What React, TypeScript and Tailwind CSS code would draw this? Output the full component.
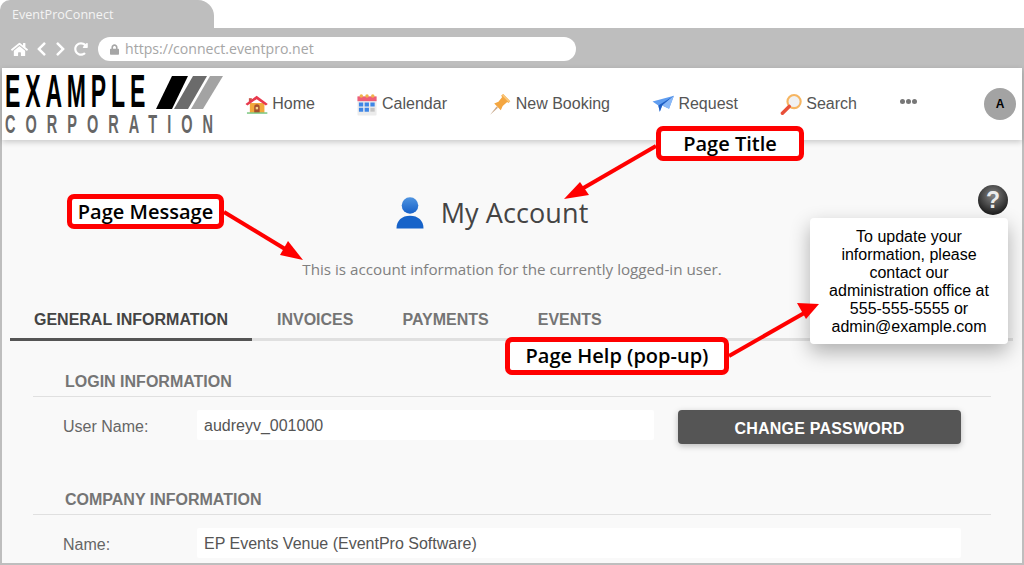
import { FaHome, FaChevronLeft, FaChevronRight, FaRedoAlt, FaLock } from "react-icons/fa"

const HomeIcon = () => (
  <svg width="24" height="20" viewBox="0 0 24 20">
    <path d="M5 9h15v10H5z" fill="#f2a93b" />
    <path d="M4 4h3v4H4z" fill="#c9554a" />
    <path d="M0.5 10L12 1.5 23.5 10 21.5 11.5 12 5 2.5 11.5z" fill="#e8394d" />
    <path d="M9.5 19v-6a2.8 2.8 0 0 1 5.6 0v6z" fill="#a5502e" />
    <rect x="11" y="13" width="2.5" height="2.5" fill="#f6d58a" />
    <rect x="2" y="18.6" width="21" height="1.4" fill="#6fc276" />
  </svg>
)

const CalendarIcon = () => (
  <svg width="21" height="23" viewBox="0 0 21 23">
    <rect x="0.5" y="3" width="20" height="20" rx="1" fill="#ececec" />
    <rect x="0.5" y="3" width="20" height="5" fill="#ee5f79" />
    <circle cx="4.5" cy="2.6" r="1.8" fill="#f1b24a" />
    <circle cx="10.5" cy="2.6" r="1.8" fill="#f1b24a" />
    <circle cx="16.5" cy="2.6" r="1.8" fill="#f1b24a" />
    <path d="M2 9.5h4.5v4H2zM8 9.5h4.5v4H8zM14 9.5h4.5v4H14zM2 15h4.5v4H2zM8 15h4.5v4H8z" fill="#3f86e6" />
    <path d="M14 15h4.5v4H14z" fill="#c4c4c4" />
  </svg>
)

const PinIcon = () => (
  <svg width="23" height="23" viewBox="0 0 23 23">
    <path d="M1 22.5L8 13.5 9.5 15z" fill="#c9a98c" />
    <path d="M5.5 10.5L10 8.5 14 3.5 12.8 2.2 15 0.5 22.5 8 20.5 10 19.3 8.8 14.5 13 12.5 17.5z" fill="#f4a640" />
    <path d="M15 0.5L22.5 8 21 9.5 13.8 2z" fill="#f9c77c" />
  </svg>
)

const PlaneIcon = () => (
  <svg width="23" height="18" viewBox="0 0 23 18">
    <path d="M0.5 6.5L22.5 0.5 17.5 14 10.5 10.5 8 17 6.5 10.5z" fill="#5f9df0" />
    <path d="M6.5 10.5L22.5 0.5 10.5 10.5 8 17z" fill="#2160c4" />
    <path d="M10.5 10.5L22.5 0.5 17.5 14z" fill="#8ab8f6" />
  </svg>
)

const SearchIcon = () => (
  <svg width="23" height="23" viewBox="0 0 23 23">
    <circle cx="14.5" cy="8.5" r="6.8" fill="#f1f1f1" stroke="#f6b561" strokeWidth="2.2" />
    <path d="M9.5 13.5L2.5 20.5" stroke="#e8503a" strokeWidth="3.6" strokeLinecap="round" />
  </svg>
)

const UserIcon = () => (
  <svg width="28" height="32" viewBox="0 0 28 32">
    <defs>
      <linearGradient id="userFill" x1="0" y1="0" x2="0" y2="1">
        <stop offset="0" stopColor="#4f94e0" />
        <stop offset="1" stopColor="#1660c8" />
      </linearGradient>
    </defs>
    <circle cx="14" cy="8.5" r="8.3" fill="url(#userFill)" />
    <path d="M0.5 31.5C0.5 23.5 6 18.8 14 18.8S27.5 23.5 27.5 31.5z" fill="#1763c9" />
  </svg>
)

const HelpIcon = () => (
  <div className="absolute left-[978px] top-[185px] w-[30px] h-[30px] rounded-full bg-[radial-gradient(circle_at_50%_35%,#858585,#1c1c1c_78%)] flex items-center justify-center">
    <span className="text-[23px] leading-none font-bold text-[#ececec]">?</span>
  </div>
)

const navItems = [
  { label: "Home", icon: <HomeIcon />, gap: "gap-[4px]", w: "w-[70px]" },
  { label: "Calendar", icon: <CalendarIcon />, gap: "gap-[5px]", w: "w-[90px]" },
  { label: "New Booking", icon: <PinIcon />, gap: "gap-[5px]", w: "w-[121px]" },
  { label: "Request", icon: <PlaneIcon />, gap: "gap-[4px]", w: "w-[86px]" },
  { label: "Search", icon: <SearchIcon />, gap: "gap-[4px]", w: "w-[77px]" },
]

const Callout = ({ text, className }: { text: string; className: string }) => (
  <div className={`absolute flex items-center justify-center bg-white border-[5px] border-[#ff0000] rounded-[7px] text-[20px] text-black font-['Open_Sans',sans-serif] font-semibold ${className}`}>
    {text}
  </div>
)

const Arrows = () => (
  <svg className="absolute left-0 top-0 pointer-events-none" width="1024" height="565" viewBox="0 0 1024 565">
    <g stroke="#ff0000" strokeWidth="4">
      <path d="M656 146L580 190" />
      <path d="M224 212L290 252" />
      <path d="M729 356L806 312" />
    </g>
    <g fill="#ff0000">
      <path d="M564 199L580 182 589 195z" />
      <path d="M303 260L280 255 288 241z" />
      <path d="M819 304L797 303 806 319z" />
    </g>
  </svg>
)

const App = () => {
  return (
    <div className="relative w-[1024px] h-[565px] overflow-hidden bg-white font-['Liberation_Sans',Arial,sans-serif]">
      {/* browser tab */}
      <div className="h-[28px] w-[214px] bg-[#bebebe] rounded-tl-[10px] rounded-tr-[16px] pl-[12px] pt-[2px] flex items-center text-[12.6px] text-[#f4f4f4] font-['Open_Sans',sans-serif]">
        EventProConnect
      </div>
      {/* browser toolbar */}
      <div className="h-[40px] bg-[#bebebe] flex items-center pl-[11px] pt-[2px] text-white">
        <FaHome className="w-[17px] h-[17px]" />
        <FaChevronLeft className="w-[11px] h-[16px] ml-[8px]" />
        <FaChevronRight className="w-[11px] h-[16px] ml-[8px]" />
        <FaRedoAlt className="w-[14px] h-[14px] ml-[8px]" />
        <div className="ml-[10px] w-[478px] h-[24px] bg-white rounded-full flex items-center pl-[12px] text-[14.1px] text-[#a6a6a6] font-['Open_Sans',sans-serif]">
          <FaLock className="w-[9px] h-[11px] mr-[6px]" />
          https://connect.eventpro.net
        </div>
      </div>

      <div className="h-[497px] border-x-2 border-b-2 border-[#bebebe] bg-[#f9f9f9]">
        {/* nav */}
        <div className="h-[72px] bg-white shadow-[0_2px_6px_rgba(0,0,0,0.2)] flex items-center relative">
          <div className="w-[243px] h-[72px] relative shrink-0">
            <span className="absolute left-[3px] top-[3px] origin-left scale-x-[0.5] text-[46px] leading-[40px] tracking-[9.7px] font-bold text-black whitespace-nowrap">EXAMPLE</span>
            <span className="absolute left-[3px] top-[46px] origin-left scale-x-[0.58] text-[25px] leading-[20px] tracking-[17.3px] font-bold text-[#666666] whitespace-nowrap">CORPORATION</span>
            <svg className="absolute left-[152px] top-[8px]" width="70" height="33" viewBox="0 0 70 33">
              <path d="M18 0h16L18 33H2z" fill="#000000" />
              <path d="M39 0h14L34 33H20z" fill="#6b6b6b" />
              <path d="M56 0h13L49 33H37z" fill="#a3a3a3" />
            </svg>
          </div>
          <div className="flex items-center gap-[42px] text-[16px] text-[#555555]">
            {navItems.map((item) => (
              <div key={item.label} className={`flex items-center ${item.gap} ${item.w} whitespace-nowrap`}>
                {item.icon}
                <span>{item.label}</span>
              </div>
            ))}
          </div>
          <div className="ml-[43px] mb-[6px] flex gap-[1px]">
            <span className="w-[5px] h-[5px] rounded-full bg-[#777777]" />
            <span className="w-[5px] h-[5px] rounded-full bg-[#777777]" />
            <span className="w-[5px] h-[5px] rounded-full bg-[#777777]" />
          </div>
          <div className="ml-[67px] w-[32px] h-[32px] rounded-full bg-[#a3a3a3] flex items-center justify-center text-[12px] font-bold text-black">
            A
          </div>
        </div>

        {/* page heading */}
        <div className="mt-[53px] h-[40px] flex items-center justify-center pr-[40px] gap-[17px]">
          <UserIcon />
          <span className="text-[27px] tracking-[0.1px] text-[#444444] font-['Open_Sans',sans-serif]">My Account</span>
        </div>
        <div className="mt-[26px] h-[20px] text-center text-[15.2px] leading-[20px] text-[#808080] font-['Open_Sans',sans-serif]">
          This is account information for the currently logged-in user.
        </div>

        {/* tabs */}
        <div className="mt-[20px] ml-[8px] w-[1003px] h-[42px] border-b-[3px] border-[#e0e0e0] flex font-bold text-[16px] text-[#757575]">
          <div className="w-[242px] h-[42px] border-b-[3px] border-[#555555] text-[#444444] text-center leading-[42px]">GENERAL INFORMATION</div>
          <div className="ml-[25px] leading-[42px]">INVOICES</div>
          <div className="ml-[49px] leading-[42px]">PAYMENTS</div>
          <div className="ml-[49px] leading-[42px]">EVENTS</div>
        </div>

        {/* form */}
        <div className="ml-[31px] w-[958px] mt-[30px]">
          <div className="h-[26px] border-b border-[#e0e0e0] pl-[32px] text-[16px] leading-[22px] font-bold text-[#757575]">LOGIN INFORMATION</div>
          <div className="mt-[13px] flex items-start">
            <div className="w-[164px] pl-[30px] h-[32px] leading-[34px] text-[16px] text-[#666666]">User Name:</div>
            <div className="w-[457px] h-[30px] bg-white rounded-[2px] pl-[7px] text-[16px] leading-[32px] text-[#555555]">audreyv_001000</div>
            <button className="ml-[24px] w-[283px] h-[34px] pt-[3px] bg-[#555555] rounded-[4px] text-white font-bold text-[16px] tracking-[0.2px] shadow-[0_2px_6px_rgba(0,0,0,0.25)]">CHANGE PASSWORD</button>
          </div>
          <div className="mt-[45px] h-[26px] border-b border-[#e0e0e0] pl-[32px] text-[16px] leading-[22px] font-bold text-[#757575]">COMPANY INFORMATION</div>
          <div className="mt-[13px] flex items-start">
            <div className="w-[164px] pl-[30px] h-[32px] leading-[34px] text-[16px] text-[#666666]">Name:</div>
            <div className="w-[764px] h-[30px] bg-white rounded-[2px] pl-[7px] text-[16px] leading-[32px] text-[#555555]">EP Events Venue (EventPro Software)</div>
          </div>
        </div>
      </div>

      {/* help button and pop-up */}
      <HelpIcon />
      <div className="absolute left-[810px] top-[218px] w-[198px] h-[126px] pt-[2px] bg-white rounded-[4px] shadow-[0_8px_20px_rgba(0,0,0,0.3)] flex items-center justify-center text-center text-[16px] leading-[18px] text-black">
        <div>
          To update your<br />information, please<br />contact our<br />administration office at<br />555-555-5555 or<br />admin@example.com
        </div>
      </div>

      {/* annotations */}
      <Arrows />
      <Callout text="Page Title" className="left-[656px] top-[126px] w-[148px] h-[35px]" />
      <Callout text="Page Message" className="left-[67px] top-[194px] w-[157px] h-[35px]" />
      <Callout text="Page Help (pop-up)" className="left-[505px] top-[337px] w-[224px] h-[38px]" />
    </div>
  )
}

export default App
